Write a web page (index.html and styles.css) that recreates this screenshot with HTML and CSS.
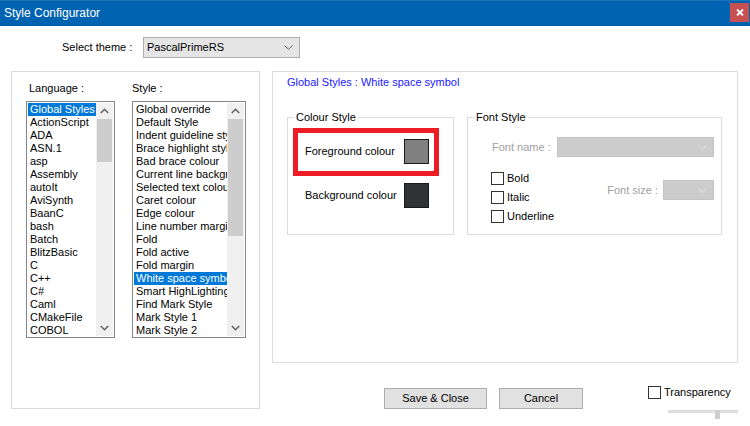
FILE: index.html
```html
<!DOCTYPE html>
<html>
<head>
<meta charset="utf-8">
<title>Style Configurator</title>
<link rel="stylesheet" href="styles.css">
</head>
<body>
<div class="window">
  <div class="titlebar">
    <span class="title">Style Configurator</span>
    <div class="close-btn">
      <svg width="8" height="7" viewBox="0 0 8 7"><path d="M1 0.5L7 6.5M7 0.5L1 6.5" stroke="#fff" stroke-width="1.8"/></svg>
    </div>
  </div>

  <div class="theme-row">
    <span class="theme-label">Select theme :</span>
    <div class="combo theme-combo">
      <span>PascalPrimeRS</span>
      <svg width="9" height="5" viewBox="0 0 9 5"><polyline points="0.5,0.5 4.5,4.3 8.5,0.5" fill="none" stroke="#606060" stroke-width="1"/></svg>
    </div>
  </div>

  <div class="panels">
    <div class="left-panel">
      <div class="list-col lang-col">
        <div class="col-label lang-label">Language :</div>
        <div class="listbox">
          <div class="items">
            <div class="item sel">Global Styles</div>
            <div class="item">ActionScript</div>
            <div class="item">ADA</div>
            <div class="item">ASN.1</div>
            <div class="item">asp</div>
            <div class="item">Assembly</div>
            <div class="item">autoIt</div>
            <div class="item">AviSynth</div>
            <div class="item">BaanC</div>
            <div class="item">bash</div>
            <div class="item">Batch</div>
            <div class="item">BlitzBasic</div>
            <div class="item">C</div>
            <div class="item">C++</div>
            <div class="item">C#</div>
            <div class="item">Caml</div>
            <div class="item">CMakeFile</div>
            <div class="item">COBOL</div>
          </div>
          <div class="scrollbar">
            <div class="sb-btn"><svg width="9" height="6" viewBox="0 0 9 6"><polyline points="0.8,5 4.5,1.3 8.2,5" fill="none" stroke="#606060" stroke-width="1.5"/></svg></div>
            <div class="sb-track"><div class="thumb lang-thumb"></div></div>
            <div class="sb-btn"><svg width="9" height="6" viewBox="0 0 9 6"><polyline points="0.8,1 4.5,4.7 8.2,1" fill="none" stroke="#606060" stroke-width="1.5"/></svg></div>
          </div>
        </div>
      </div>
      <div class="list-col style-col">
        <div class="col-label">Style :</div>
        <div class="listbox">
          <div class="items">
            <div class="item">Global override</div>
            <div class="item">Default Style</div>
            <div class="item">Indent guideline style</div>
            <div class="item">Brace highlight style</div>
            <div class="item">Bad brace colour</div>
            <div class="item">Current line background colour</div>
            <div class="item">Selected text colour</div>
            <div class="item">Caret colour</div>
            <div class="item">Edge colour</div>
            <div class="item">Line number margin</div>
            <div class="item">Fold</div>
            <div class="item">Fold active</div>
            <div class="item">Fold margin</div>
            <div class="item sel">White space symbol</div>
            <div class="item">Smart HighLighting</div>
            <div class="item">Find Mark Style</div>
            <div class="item">Mark Style 1</div>
            <div class="item">Mark Style 2</div>
          </div>
          <div class="scrollbar">
            <div class="sb-btn"><svg width="9" height="6" viewBox="0 0 9 6"><polyline points="0.8,5 4.5,1.3 8.2,5" fill="none" stroke="#606060" stroke-width="1.5"/></svg></div>
            <div class="sb-track"><div class="thumb style-thumb"></div></div>
            <div class="sb-btn"><svg width="9" height="6" viewBox="0 0 9 6"><polyline points="0.8,1 4.5,4.7 8.2,1" fill="none" stroke="#606060" stroke-width="1.5"/></svg></div>
          </div>
        </div>
      </div>
    </div>

    <div class="right-col">
      <div class="right-panel">
        <div class="style-header">Global Styles : White space symbol</div>
        <div class="groups">
          <div class="group colour-group">
            <span class="legend">Colour Style</span>
            <div class="colour-row">
              <span class="colour-label">Foreground colour</span>
              <span class="swatch swatch-fg"></span>
            </div>
            <div class="colour-row">
              <span class="colour-label">Background colour</span>
              <span class="swatch swatch-bg"></span>
            </div>
            <div class="highlight-box"></div>
          </div>
          <div class="group font-group">
            <span class="legend">Font Style</span>
            <div class="font-name-row">
              <span class="disabled-label">Font name :</span>
              <div class="combo disabled-combo name-combo">
                <svg width="9" height="5" viewBox="0 0 9 5"><polyline points="0.5,0.5 4.5,4.3 8.5,0.5" fill="none" stroke="#e4e4e4" stroke-width="1"/></svg>
              </div>
            </div>
            <div class="font-opts">
              <div class="checks">
                <div class="check-row"><span class="checkbox"></span><span>Bold</span></div>
                <div class="check-row"><span class="checkbox"></span><span>Italic</span></div>
                <div class="check-row"><span class="checkbox"></span><span>Underline</span></div>
              </div>
              <div class="size-row">
                <span class="disabled-label">Font size :</span>
                <div class="combo disabled-combo size-combo">
                  <svg width="9" height="5" viewBox="0 0 9 5"><polyline points="0.5,0.5 4.5,4.3 8.5,0.5" fill="none" stroke="#e4e4e4" stroke-width="1"/></svg>
                </div>
              </div>
            </div>
          </div>
        </div>
      </div>

      <div class="bottom-row">
        <div class="btn btn-save">Save &amp; Close</div>
        <div class="btn btn-cancel">Cancel</div>
        <div class="transp">
          <div class="transp-row"><span class="checkbox"></span><span>Transparency</span></div>
          <div class="slider">
            <div class="slider-track"></div>
            <div class="slider-thumb"></div>
          </div>
        </div>
      </div>
    </div>
  </div>
</div>
</body>
</html>
```

FILE: styles.css
```css
html, body {
  margin: 0;
  padding: 0;
  background: #ffffff;
}

body {
  font-family: "Liberation Sans", Arial, sans-serif;
  font-size: 11px;
  line-height: 13px;
  color: #000;
}

.window {
  width: 750px;
  height: 426px;
  overflow: hidden;
  background: #fff;
}

/* Title bar */
.titlebar {
  height: 26px;
  background: #0063b1;
  border-top: 1px solid #1a72bb;
  box-sizing: border-box;
  display: flex;
  align-items: flex-start;
  justify-content: space-between;
}

.title {
  color: #fff;
  font-size: 12px;
  line-height: 24px;
  padding-left: 4px;
}

.close-btn {
  width: 19px;
  height: 19px;
  margin-top: 2px;
  margin-right: 1px;
  background: #c75050;
  display: flex;
  align-items: center;
  justify-content: center;
}

/* Theme row */
.theme-row {
  display: flex;
  align-items: center;
  margin-top: 11px;
  padding-left: 62px;
}

.theme-label {
  width: 81px;
}

.combo {
  box-sizing: border-box;
  display: flex;
  align-items: center;
  justify-content: space-between;
}

.theme-combo {
  width: 157px;
  height: 21px;
  background: #e5e5e5;
  border: 1px solid #acacac;
  padding: 0 6px 0 3px;
}

/* Panels */
.panels {
  display: flex;
  align-items: flex-start;
  margin-top: 13px;
  padding-left: 11px;
}

.left-panel {
  width: 249px;
  height: 338px;
  box-sizing: border-box;
  border: 1px solid #dcdcdc;
  display: flex;
  gap: 17px;
  padding: 10px 0 0 14px;
}

.list-col {
  display: flex;
  flex-direction: column;
}

.col-label {
  height: 13px;
  margin-bottom: 6px;
}

.lang-label {
  padding-left: 3px;
}

.lang-col .listbox {
  width: 89px;
}

.style-col .listbox {
  width: 114px;
}

.listbox {
  height: 237px;
  box-sizing: border-box;
  border: 1px solid #828790;
  padding: 1px;
  display: flex;
  background: #fff;
}

.items {
  flex: 1;
  min-width: 0;
  overflow: hidden;
}

.item {
  height: 13px;
  line-height: 13px;
  padding-left: 2px;
  white-space: nowrap;
  overflow: hidden;
}

.item.sel {
  background: #0078d7;
  color: #fff;
}

.scrollbar {
  width: 17px;
  background: #f0f0f0;
  display: flex;
  flex-direction: column;
}

.sb-btn {
  height: 16px;
  display: flex;
  align-items: center;
  justify-content: center;
}

.sb-track {
  flex: 1;
  display: flex;
  flex-direction: column;
}

.thumb {
  background: #cdcdcd;
  margin: 0 1px;
}

.lang-thumb {
  height: 43px;
}

.style-thumb {
  height: 117px;
}

/* Right column */
.right-col {
  margin-left: 12px;
  width: 466px;
  display: flex;
  flex-direction: column;
}

.right-panel {
  width: 466px;
  height: 292px;
  box-sizing: border-box;
  border: 1px solid #dcdcdc;
  padding: 4px 0 0 14px;
}

.style-header {
  color: #2020ff;
  height: 13px;
}

.groups {
  display: flex;
  gap: 13px;
  margin-top: 28px;
}

.group {
  position: relative;
  height: 118px;
  box-sizing: border-box;
  border: 1px solid #dcdcdc;
}

.legend {
  position: absolute;
  top: -7px;
  left: 6px;
  padding: 0 2px;
  background: #fff;
  line-height: 13px;
}

.colour-group {
  width: 167px;
  padding: 21px 0 0 17px;
}

.colour-row {
  display: flex;
  align-items: center;
  margin-bottom: 19px;
}

.colour-label {
  width: 99px;
}

.swatch {
  width: 25px;
  height: 25px;
  box-sizing: border-box;
  border: 1px solid #1a1a1a;
}

.swatch-fg {
  background: #808080;
}

.swatch-bg {
  background: #2f3336;
}

.highlight-box {
  position: absolute;
  left: 5px;
  top: 10px;
  width: 146px;
  height: 48px;
  box-sizing: border-box;
  border: 5px solid #ed1c24;
}

.font-group {
  width: 255px;
  padding: 19px 7px 0 23px;
}

.font-name-row {
  display: flex;
  align-items: center;
  justify-content: space-between;
}

.disabled-label {
  color: #a0a0a0;
  padding-left: 1px;
}

.disabled-combo {
  height: 20px;
  background: #cccccc;
  border: 1px solid #c4c4c4;
  justify-content: flex-end;
  padding-right: 6px;
}

.name-combo {
  width: 157px;
}

.size-combo {
  width: 51px;
}

.font-opts {
  display: flex;
  justify-content: space-between;
  margin-top: 15px;
}

.checks {
  display: flex;
  flex-direction: column;
  gap: 6px;
}

.check-row {
  display: flex;
  align-items: center;
  gap: 3px;
  height: 13px;
}

.checkbox {
  width: 13px;
  height: 13px;
  box-sizing: border-box;
  border: 1px solid #333;
  background: #fff;
  flex: none;
}

.size-row {
  display: flex;
  align-items: center;
  gap: 5px;
  margin-top: 8px;
  height: 20px;
}

/* Bottom row */
.bottom-row {
  display: flex;
  align-items: flex-start;
  margin-top: 23px;
  padding-left: 112px;
}

.btn {
  height: 21px;
  box-sizing: border-box;
  border: 1px solid #adadad;
  background: #e1e1e1;
  display: flex;
  align-items: center;
  justify-content: center;
  margin-top: 2px;
}

.btn-save {
  width: 103px;
}

.btn-cancel {
  width: 84px;
  margin-left: 12px;
}

.transp {
  margin-left: auto;
  width: 90px;
}

.transp-row {
  display: flex;
  align-items: center;
  gap: 3px;
}

.slider {
  position: relative;
  margin: 11px 0 0 20px;
  width: 70px;
  height: 9px;
}

.slider-track {
  margin-top: 3px;
  height: 3px;
  background: #e7e7e7;
  border-top: 1px solid #d6d6d6;
  border-bottom: 1px solid #d6d6d6;
  box-sizing: border-box;
}

.slider-thumb {
  position: absolute;
  left: 47px;
  top: 0;
  width: 5px;
  height: 9px;
  background: #cdcdcd;
}
```
